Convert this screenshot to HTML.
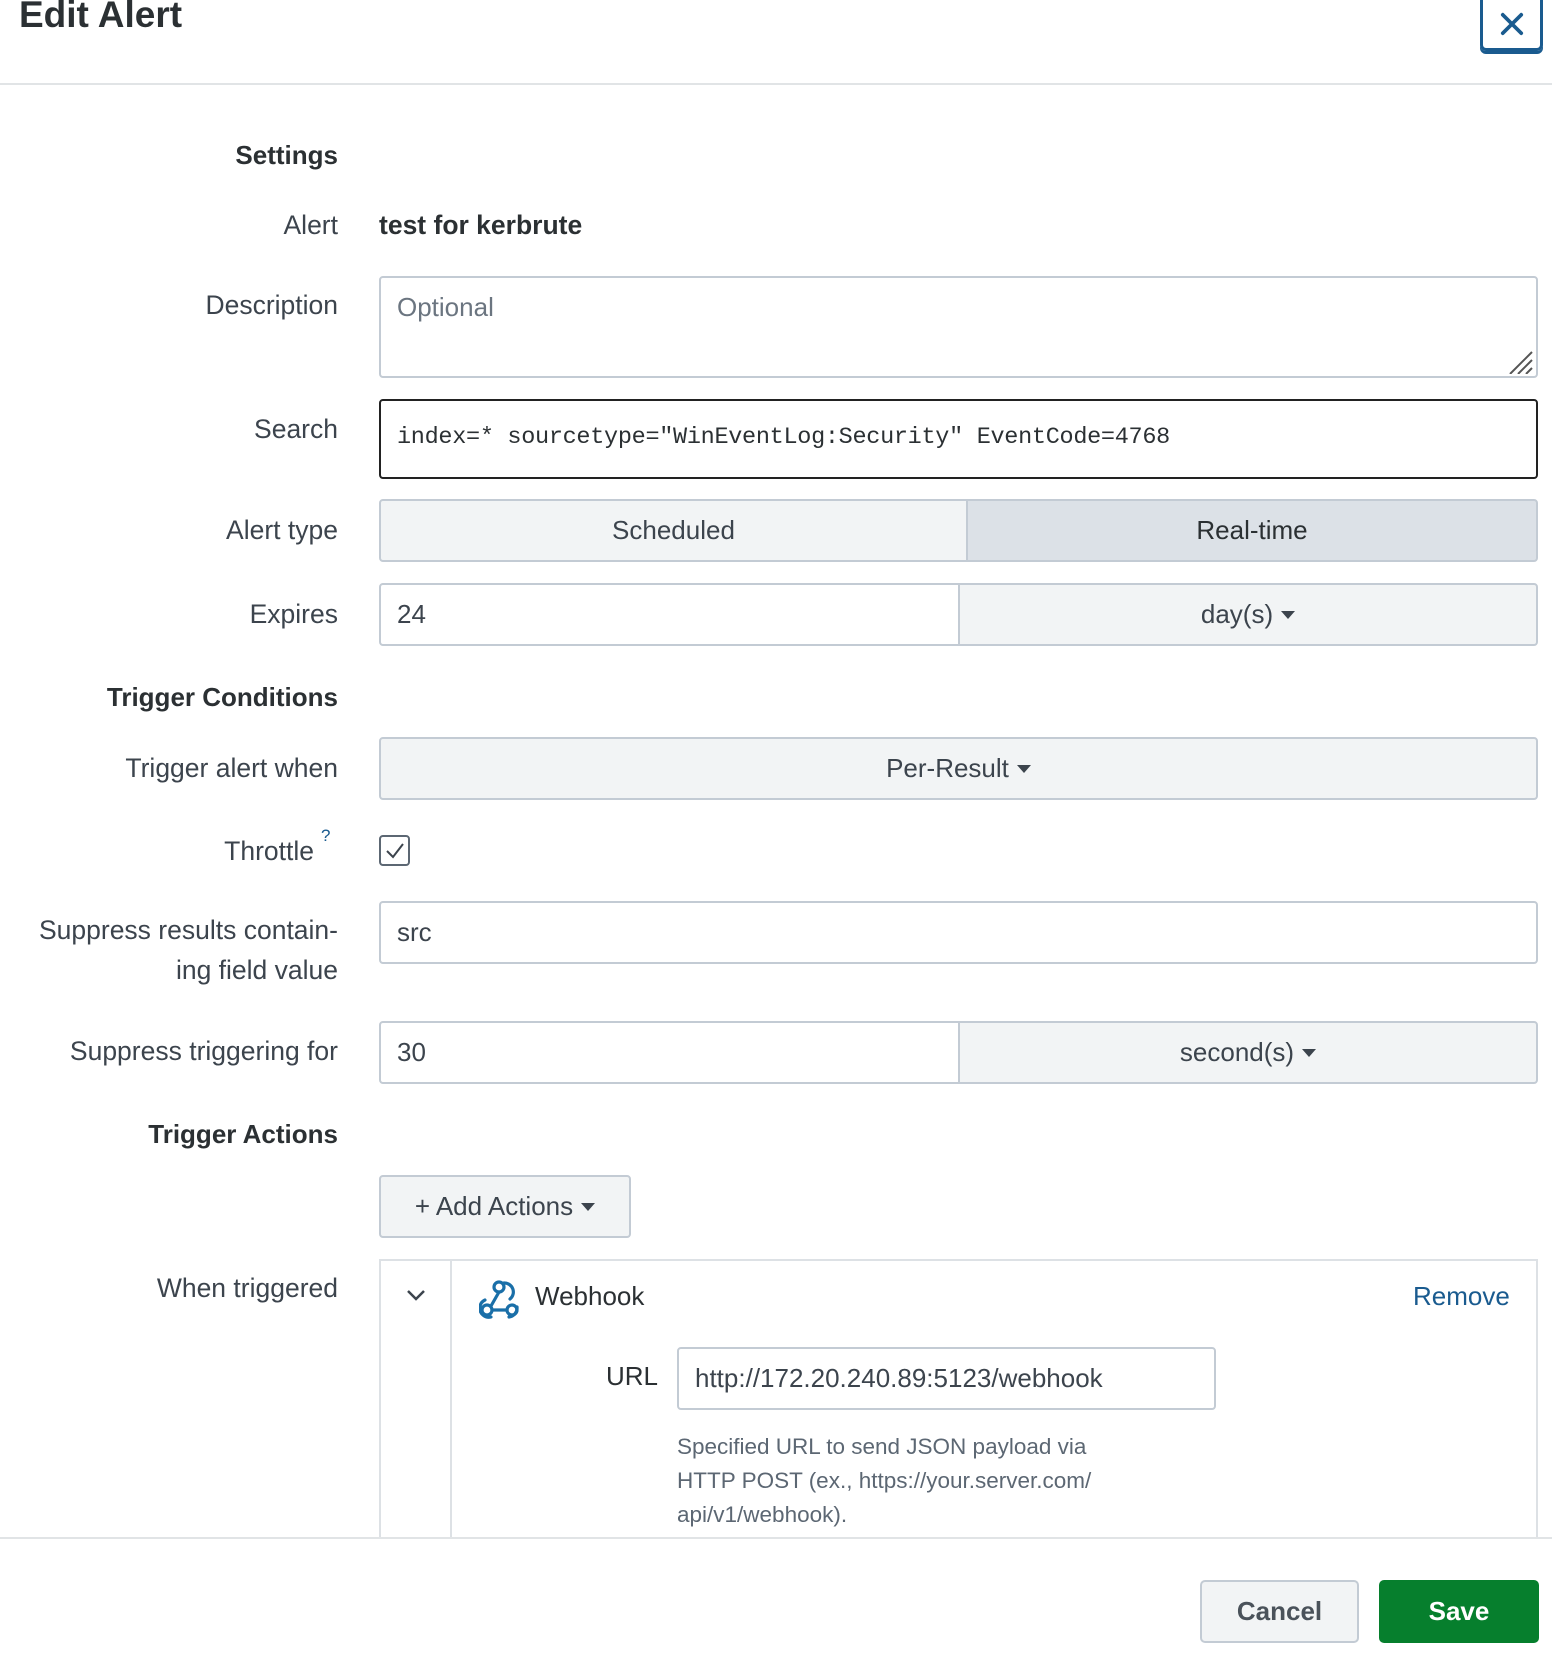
<!DOCTYPE html>
<html><head><meta charset="utf-8"><style>
*{box-sizing:border-box;margin:0;padding:0}
body{width:1552px;height:1658px;background:#fff;font-family:"Liberation Sans",sans-serif;color:#3c444d;position:relative;overflow:hidden}
.a{position:absolute}
.lbl{position:absolute;right:1214px;font-size:26.5px;color:#3c444d;white-space:nowrap;text-align:right;line-height:40px}
.h{font-weight:bold;color:#2b3033;font-size:26px}
.box{position:absolute;border:2px solid #c3cbd4;border-radius:4px;background:#fff}
.btn{position:absolute;border:2px solid #c3cbd4;background:#f2f4f5;color:#3c444d;font-size:26px;display:flex;align-items:center;justify-content:center}
.tri{display:inline-block;width:0;height:0;border-left:7px solid transparent;border-right:7px solid transparent;border-top:8px solid #3c444d;margin-left:8px;vertical-align:middle}
.txt{position:absolute;font-size:26px;line-height:40px}
</style></head><body>
<div class="a" style="left:19px;top:-6px;font-size:37px;font-weight:bold;color:#2b3033">Edit Alert</div>
<div class="a" style="left:1480px;top:-10px;width:63px;height:61px;border:3px solid #1a5b8f;border-radius:6px;box-shadow:0 3px 0 #1a5b8f"></div>
<svg class="a" style="left:1500px;top:12px" width="24" height="24" viewBox="0 0 26 26"><path d="M3 3L23 23M23 3L3 23" stroke="#1a5b8f" stroke-width="4" stroke-linecap="round"/></svg>
<div class="a" style="left:0;top:83px;width:1552px;height:2px;background:#e1e4e6"></div>

<div class="lbl h" style="top:135px">Settings</div>
<div class="lbl" style="top:205px">Alert</div>
<div class="txt" style="left:379px;top:205px;font-weight:bold;color:#2b3033;font-size:26.5px">test for kerbrute</div>

<div class="lbl" style="top:285px">Description</div>
<div class="box" style="left:379px;top:276px;width:1159px;height:102px"></div>
<div class="txt" style="left:397px;top:287px;color:#6b7580">Optional</div>
<svg class="a" style="left:1508px;top:350px" width="26" height="24"><path d="M24 2L2 24M24 10L10 24M24 18L18 24" stroke="#555" stroke-width="2"/></svg>

<div class="lbl" style="top:409px">Search</div>
<div class="a" style="left:379px;top:399px;width:1159px;height:80px;border:2px solid #222;border-radius:4px"></div>
<div class="a" style="left:397px;top:423px;font-family:'Liberation Mono',monospace;font-size:23.5px;color:#2b3033;line-height:30px;letter-spacing:-0.3px">index=* sourcetype="WinEventLog:Security" EventCode=4768</div>

<div class="lbl" style="top:510px">Alert type</div>
<div class="btn" style="left:379px;top:499px;width:589px;height:63px;border-radius:4px 0 0 4px">Scheduled</div>
<div class="btn" style="left:966px;top:499px;width:572px;height:63px;background:#dce1e7;color:#2b3033;border-radius:0 4px 4px 0">Real-time</div>

<div class="lbl" style="top:594px">Expires</div>
<div class="box" style="left:379px;top:583px;width:581px;height:63px;border-radius:4px 0 0 4px"></div>
<div class="txt" style="left:397px;top:594px">24</div>
<div class="btn" style="left:958px;top:583px;width:580px;height:63px;border-radius:0 4px 4px 0">day(s)<span class="tri"></span></div>

<div class="lbl h" style="top:677px">Trigger Conditions</div>
<div class="lbl" style="top:748px">Trigger alert when</div>
<div class="btn" style="left:379px;top:737px;width:1159px;height:63px;border-radius:4px">Per-Result<span class="tri"></span></div>

<div class="lbl" style="top:831px;right:1238px">Throttle</div>
<div class="a" style="left:321px;top:826px;font-size:17px;color:#1a5b8f">?</div>
<div class="a" style="left:379px;top:835px;width:31px;height:31px;border:2px solid #5c6773;border-radius:4px"></div>
<svg class="a" style="left:384px;top:840px" width="22" height="22"><path d="M3 11L9 17L19 4" stroke="#3c444d" stroke-width="2" fill="none"/></svg>

<div class="lbl" style="top:910px">Suppress results contain-</div>
<div class="lbl" style="top:950px">ing field value</div>
<div class="box" style="left:379px;top:901px;width:1159px;height:63px"></div>
<div class="txt" style="left:397px;top:912px">src</div>

<div class="lbl" style="top:1031px">Suppress triggering for</div>
<div class="box" style="left:379px;top:1021px;width:581px;height:63px;border-radius:4px 0 0 4px"></div>
<div class="txt" style="left:397px;top:1032px">30</div>
<div class="btn" style="left:958px;top:1021px;width:580px;height:63px;border-radius:0 4px 4px 0">second(s)<span class="tri"></span></div>

<div class="lbl h" style="top:1114px">Trigger Actions</div>
<div class="btn" style="left:379px;top:1175px;width:252px;height:63px;border-radius:4px">+ Add Actions<span class="tri"></span></div>

<div class="lbl" style="top:1268px">When triggered</div>
<div class="a" style="left:379px;top:1259px;width:1159px;height:279px;border:2px solid #dde1e5;border-bottom:none"></div>
<div class="a" style="left:450px;top:1260px;width:2px;height:278px;background:#dde1e5"></div>
<svg class="a" style="left:405px;top:1287px" width="22" height="16"><path d="M3 4L11 12L19 4" stroke="#3c444d" stroke-width="2.5" fill="none"/></svg>
<svg class="a" style="left:479px;top:1279px" width="42" height="40" viewBox="0 0 42 40" fill="none" stroke="#1a6fa8" stroke-width="3.2" stroke-linecap="round"><circle cx="20" cy="8" r="5"/><circle cx="8" cy="31" r="5"/><circle cx="33" cy="31" r="5"/><path d="M20 13L12 27M13 31H28M25 4A9 9 0 0 1 31 20"/><path d="M6 21A9 9 0 0 0 4 36A9 9 0 0 0 12 38M30 38A9 9 0 0 0 38 28"/></svg>
<div class="txt" style="left:535px;top:1276px;color:#2b3033">Webhook</div>
<div class="txt" style="left:1413px;top:1276px;color:#1a5b8f">Remove</div>

<div class="txt" style="left:606px;top:1356px;color:#2b3033">URL</div>
<div class="box" style="left:677px;top:1347px;width:539px;height:63px"></div>
<div class="txt" style="left:695px;top:1358px;color:#3c444d">http://172.20.240.89:5123/webhook</div>
<div class="a" style="left:677px;top:1430px;font-size:22.5px;line-height:34px;color:#5c6773;width:450px">Specified URL to send JSON payload via HTTP POST (ex., https://your.server.com/ api/v1/webhook).</div>

<div class="a" style="left:0;top:1537px;width:1552px;height:2px;background:#e1e4e6"></div>
<div class="btn" style="left:1200px;top:1580px;width:159px;height:63px;border-radius:5px;font-weight:bold;color:#4a525a">Cancel</div>
<div class="a" style="left:1379px;top:1580px;width:160px;height:63px;border-radius:5px;background:#067f2d;color:#fff;font-size:26px;font-weight:bold;display:flex;align-items:center;justify-content:center">Save</div>
</body></html>
